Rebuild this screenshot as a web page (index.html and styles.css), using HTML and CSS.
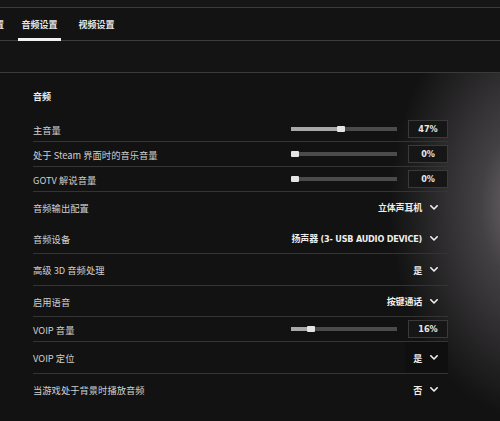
FILE: index.html
```html
<!DOCTYPE html>
<html lang="zh-CN">
<head>
<meta charset="utf-8">
<title>音频设置</title>
<link rel="stylesheet" href="styles.css">
</head>
<body>
<div class="screen">
  <div class="topstrip"></div>
  <nav class="tabs">
    <div class="tab cut">游戏设置</div>
    <div class="tab active">音频设置</div>
    <div class="tab">视频设置</div>
  </nav>
  <div class="subbar"></div>
  <main class="panel">
    <h2 class="section-title">音频</h2>

    <div class="row slider-row">
      <span class="label">主音量</span>
      <div class="control">
        <div class="track"><div class="fill" style="width:47%"></div><div class="thumb" style="left:calc(47% - 4px)"></div></div>
        <div class="valbox">47%</div>
      </div>
    </div>
    <div class="row slider-row">
      <span class="label">处于 Steam 界面时的音乐音量</span>
      <div class="control">
        <div class="track"><div class="fill" style="width:0%"></div><div class="thumb" style="left:0"></div></div>
        <div class="valbox">0%</div>
      </div>
    </div>
    <div class="row slider-row">
      <span class="label">GOTV 解说音量</span>
      <div class="control">
        <div class="track"><div class="fill" style="width:0%"></div><div class="thumb" style="left:0"></div></div>
        <div class="valbox">0%</div>
      </div>
    </div>

    <div class="row drop-row no-line">
      <span class="label">音频输出配置</span>
      <div class="dropdown"><span class="value">立体声耳机</span><svg class="chev" viewBox="0 0 8 5" width="8" height="5"><polyline points="0.8,0.8 4,4 7.2,0.8"/></svg></div>
    </div>
    <div class="row drop-row">
      <span class="label">音频设备</span>
      <div class="dropdown"><span class="value">扬声器 (3- USB AUDIO DEVICE)</span><svg class="chev" viewBox="0 0 8 5" width="8" height="5"><polyline points="0.8,0.8 4,4 7.2,0.8"/></svg></div>
    </div>
    <div class="row drop-row tall">
      <span class="label">高级 3D 音频处理</span>
      <div class="dropdown"><span class="value">是</span><svg class="chev" viewBox="0 0 8 5" width="8" height="5"><polyline points="0.8,0.8 4,4 7.2,0.8"/></svg></div>
    </div>
    <div class="row drop-row">
      <span class="label">启用语音</span>
      <div class="dropdown"><span class="value">按键通话</span><svg class="chev" viewBox="0 0 8 5" width="8" height="5"><polyline points="0.8,0.8 4,4 7.2,0.8"/></svg></div>
    </div>
    <div class="row slider-row">
      <span class="label">VOIP 音量</span>
      <div class="control">
        <div class="track"><div class="fill" style="width:16%"></div><div class="thumb" style="left:calc(16% - 1px)"></div></div>
        <div class="valbox">16%</div>
      </div>
    </div>
    <div class="row drop-row tall">
      <span class="label">VOIP 定位</span>
      <div class="dropdown hover"><span class="value">是</span><svg class="chev" viewBox="0 0 8 5" width="8" height="5"><polyline points="0.8,0.8 4,4 7.2,0.8"/></svg></div>
    </div>
    <div class="row drop-row tall no-line">
      <span class="label">当游戏处于背景时播放音频</span>
      <div class="dropdown"><span class="value">否</span><svg class="chev" viewBox="0 0 8 5" width="8" height="5"><polyline points="0.8,0.8 4,4 7.2,0.8"/></svg></div>
    </div>
  </main>
</div>
</body>
</html>
```
FILE: styles.css
```css
html, body {
  margin: 0;
  padding: 0;
}
body {
  width: 500px;
  height: 421px;
  overflow: hidden;
  background-color: #121212;
  font-family: "Noto Sans CJK SC", "DejaVu Sans", sans-serif;
}
.screen {
  width: 500px;
  height: 421px;
  background:
    radial-gradient(ellipse 145px 215px at 535px 205px, rgba(122, 116, 122, 1) 0%, rgba(84, 80, 84, 0.75) 38%, rgba(18, 18, 18, 0) 100%),
    #121212;
}
.topstrip {
  height: 7px;
  background: #161616;
  border-bottom: 1px solid #3c3c3c;
}
.tabs {
  display: flex;
  gap: 14px;
  height: 32px;
  margin-left: -37px;
  border-bottom: 1px solid #3c3c3c;
  background: #131313;
}
.tab {
  position: relative;
  width: 43px;
  display: flex;
  align-items: center;
  justify-content: center;
  font-size: 9px;
  font-weight: 700;
  color: #e6e6e6;
}
.tab.cut {
  width: 41px;
  justify-content: flex-end;
}
.tab.active::after {
  content: "";
  position: absolute;
  left: 0;
  right: 0;
  bottom: -1px;
  height: 3px;
  background: #f2f2f2;
}
.subbar {
  height: 31px;
  border-bottom: 1px solid #3a3a3a;
  background: #141414;
}
.panel {
  margin-left: 33px;
  width: 415px;
}
.section-title {
  margin: 0;
  padding-top: 17px;
  margin-bottom: 13px;
  height: 14px;
  line-height: 14px;
  font-size: 9px;
  font-weight: 700;
  color: #ececec;
}
.row {
  box-sizing: border-box;
  display: flex;
  align-items: center;
  justify-content: space-between;
  border-bottom: 1px solid #343434;
}
.row.no-line {
  border-bottom-color: transparent;
}
.slider-row {
  height: 25px;
}
.drop-row {
  height: 31px;
}
.drop-row.tall {
  height: 32px;
}
.label {
  font-size: 9.3px;
  color: #d0d0d0;
  line-height: 12px;
  padding-top: 1px;
}
.control {
  display: flex;
  align-items: center;
  gap: 11px;
}
.track {
  position: relative;
  width: 106px;
  height: 4px;
  background: #4b4b4b;
}
.fill {
  height: 100%;
  background: #a8a8a8;
}
.thumb {
  position: absolute;
  top: -1px;
  width: 8px;
  height: 6px;
  border-radius: 1px;
  background: #e4e4e4;
}
.valbox {
  box-sizing: border-box;
  width: 40px;
  height: 18px;
  border: 1px solid #3a3a3a;
  background: #161616;
  display: flex;
  align-items: center;
  justify-content: center;
  font-family: "DejaVu Sans", "Noto Sans CJK SC", sans-serif;
  font-stretch: condensed;
  font-size: 9px;
  font-weight: 700;
  color: #e8e8e8;
}
.dropdown {
  align-self: stretch;
  display: flex;
  align-items: center;
  gap: 8px;
  padding: 0 10px 0 8px;
}
.dropdown.hover {
  background: #0f0f0f;
}
.value {
  font-family: "DejaVu Sans", "Noto Sans CJK SC", sans-serif;
  font-stretch: condensed;
  font-size: 9px;
  font-weight: 700;
  color: #ededed;
  letter-spacing: -0.2px;
  padding-top: 1px;
}
.chev {
  display: block;
  fill: none;
  stroke: #f0f0f0;
  stroke-width: 1.6;
  stroke-linecap: round;
  stroke-linejoin: round;
}
```
